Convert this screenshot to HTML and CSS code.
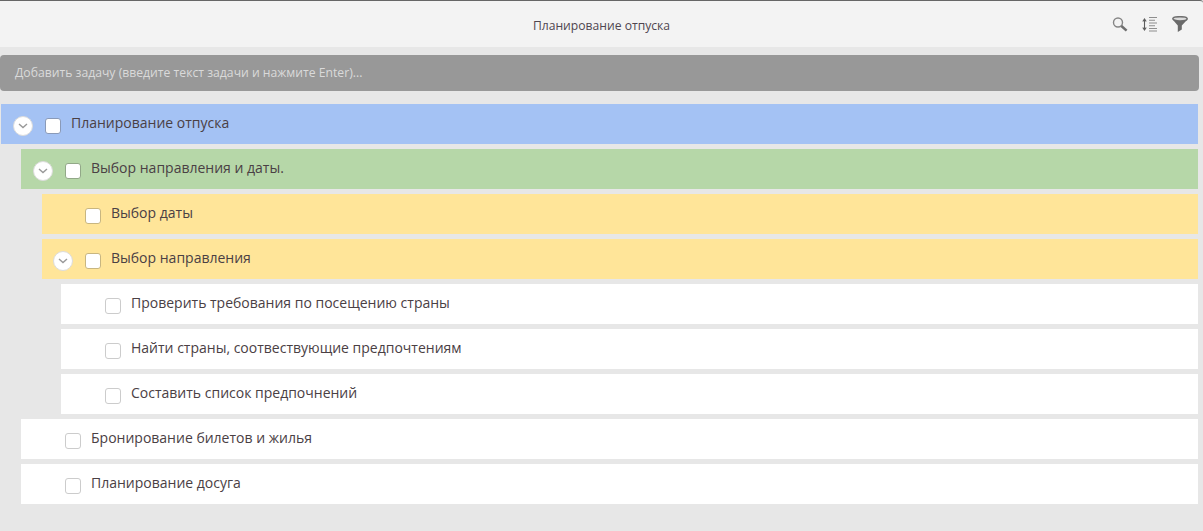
FILE: index.html
```html
<!DOCTYPE html>
<html lang="ru">
<head>
<meta charset="utf-8">
<title>Планирование отпуска</title>
<link rel="stylesheet" href="styles.css">
</head>
<body>
<header class="topbar">
  <div class="topbar-title">Планирование отпуска</div>
  <div class="topbar-icons">
    <svg class="icon-search" width="16" height="16" viewBox="0 0 16 16"><circle cx="6" cy="6.5" r="4.5" fill="none" stroke="#858585" stroke-width="1.4"/><path d="M9.4 10 L14.6 14.6" stroke="#6f6f6f" stroke-width="2.5" fill="none"/></svg>
    <svg class="icon-sort" width="16" height="16" viewBox="0 0 16 16"><path d="M2.5 3.5v10M0.8 5.5l1.7-2.5 1.7 2.5M0.8 11.5l1.7 2.5 1.7-2.5" stroke="#5c5c5c" stroke-width="1.1" fill="none"/><path d="M7 1.5h8M7 4.3h6M7 7h8M7 9.7h6M7 12.5h8M7 15h8" stroke="#8e8e8e" stroke-width="1.1" fill="none"/></svg>
    <svg class="icon-filter" width="16" height="16" viewBox="0 0 16 16"><ellipse cx="8" cy="2.8" rx="7.2" ry="2.1" fill="#dcdcdc" stroke="#6f6f6f" stroke-width="1.5"/><path d="M0.6 3.4 L5.8 9.6 V15.9 L9.8 13.4 V9.6 L15.4 3.4 Q8 6.8 0.6 3.4Z" fill="#6a6a6a"/></svg>
  </div>
</header>
<div class="add-wrap">
  <div class="add-task">Добавить задачу (введите текст задачи и нажмите Enter)...</div>
</div>
<main class="tree">
  <div class="row level-0 blue">
    <span class="toggle"><svg width="10" height="6" viewBox="0 0 10 6"><path d="M1 1l4 3.5L9 1" fill="none" stroke="#999" stroke-width="1.4"/></svg></span>
    <span class="check check-blue"></span><span class="label">Планирование отпуска</span>
  </div>
  <div class="row level-1 green">
    <span class="toggle"><svg width="10" height="6" viewBox="0 0 10 6"><path d="M1 1l4 3.5L9 1" fill="none" stroke="#999" stroke-width="1.4"/></svg></span>
    <span class="check check-green"></span><span class="label">Выбор направления и даты.</span>
  </div>
  <div class="row level-2 yellow">
    <span class="toggle-space"></span>
    <span class="check check-yellow"></span><span class="label">Выбор даты</span>
  </div>
  <div class="row level-2 yellow">
    <span class="toggle"><svg width="10" height="6" viewBox="0 0 10 6"><path d="M1 1l4 3.5L9 1" fill="none" stroke="#999" stroke-width="1.4"/></svg></span>
    <span class="check check-yellow"></span><span class="label">Выбор направления</span>
  </div>
  <div class="row level-3">
    <span class="toggle-space"></span>
    <span class="check"></span><span class="label">Проверить требования по посещению страны</span>
  </div>
  <div class="row level-3">
    <span class="toggle-space"></span>
    <span class="check"></span><span class="label">Найти страны, соотвествующие предпочтениям</span>
  </div>
  <div class="row level-3">
    <span class="toggle-space"></span>
    <span class="check"></span><span class="label">Составить список предпочнений</span>
  </div>
  <div class="row level-1">
    <span class="toggle-space"></span>
    <span class="check"></span><span class="label">Бронирование билетов и жилья</span>
  </div>
  <div class="row level-1">
    <span class="toggle-space"></span>
    <span class="check"></span><span class="label">Планирование досуга</span>
  </div>
</main>
</body>
</html>
```
FILE: styles.css
```css
* { box-sizing: border-box; }
html, body { margin: 0; padding: 0; }
body {
  background: #e7e7e7;
  font-family: "Open Sans", "Noto Sans", sans-serif;
  font-size: 14px;
  color: #4a4044;
  height: 531px;
  overflow: hidden;
}
.topbar {
  height: 47px;
  background: #f3f3f3;
  border-top: 1px solid #666;
  border-top-right-radius: 3px;
  display: flex;
  align-items: center;
  justify-content: center;
  position: relative;
}
.topbar-title { font-size: 12.15px; color: #4f4650; margin-top: 3px; }
.topbar-icons {
  position: absolute;
  right: 15px;
  top: 15px;
  display: flex;
  gap: 14px;
}
.add-wrap { padding: 8px 4px 0 0; }
.add-task {
  height: 36px;
  background: #989898;
  border-radius: 4px;
  color: #dadada;
  font-size: 12.2px;
  line-height: 36px;
  padding-left: 15px;
}
.tree {
  padding: 13px 5px 0 1px;
  display: flex;
  flex-direction: column;
  gap: 5px;
}
.row {
  height: 40px;
  background: #fff;
  display: flex;
  align-items: center;
}
.level-0 { margin-left: 0; padding-left: 12px; }
.level-1 { margin-left: 20px; padding-left: 12px; }
.level-2 { margin-left: 41px; padding-left: 11px; }
.level-3 { margin-left: 60px; padding-left: 12px; }
.blue { background: #a4c2f4; }
.green { background: #b6d7a8; }
.yellow { background: #ffe599; }
.toggle, .toggle-space {
  width: 20px;
  height: 20px;
  flex: none;
  margin-top: 4px;
  margin-right: 12px;
}
.toggle {
  border-radius: 50%;
  background: #fff;
  border: 1px solid #dcdcdc;
  display: flex;
  align-items: center;
  justify-content: center;
}
.check {
  width: 16px;
  height: 16px;
  flex: none;
  margin-top: 4px;
  background: #fff;
  border: 1px solid #ccc;
  border-radius: 3px;
}
.check-blue { border-color: #8a9ab8; }
.check-green { border-color: #92a888; }
.check-yellow { border-color: #c8b680; }
.label { margin-left: 10px; margin-top: -3px; white-space: nowrap; }
```
